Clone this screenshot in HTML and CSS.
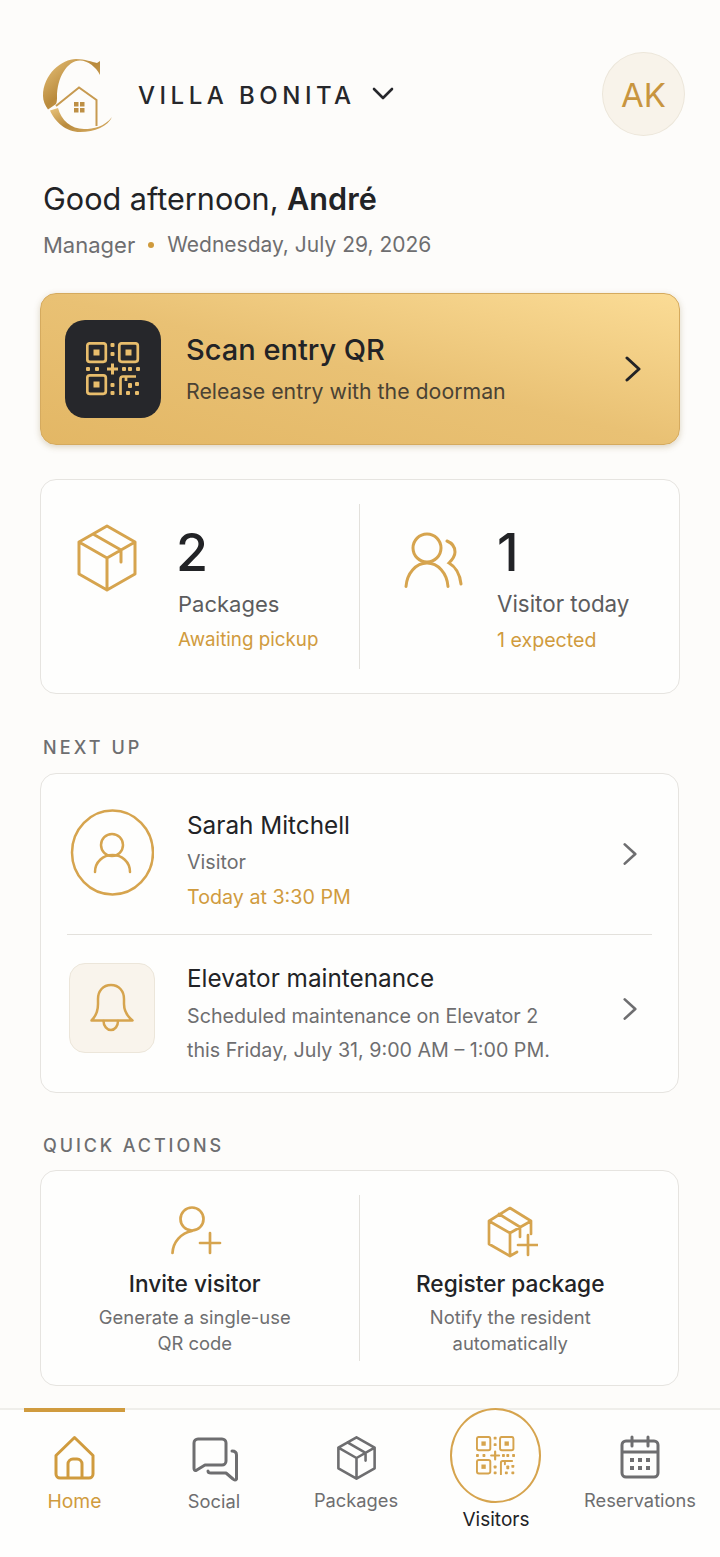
FILE: index.html
```html
<!DOCTYPE html>
<html>
<head>
    <title>Villa Bonita</title>
    <meta charset="utf-8">
    <meta name="viewport" content="width=device-width, initial-scale=1">
    <link rel="stylesheet" href="styles.css">
</head>
<body>

    <!-- shared icons -->
    <svg class="defs" width="0" height="0">
        <symbol id="qr" viewBox="0 0 54 54">
            <rect x="1.3" y="1.3" width="18.5" height="18.5" rx="2.5" fill="none" stroke="currentColor" stroke-width="2.7"/>
            <rect x="7.5" y="7.5" width="6" height="6" fill="currentColor"/>
            <rect x="33.3" y="1.3" width="18.5" height="18.5" rx="2.5" fill="none" stroke="currentColor" stroke-width="2.7"/>
            <rect x="39.5" y="7.5" width="6" height="6" fill="currentColor"/>
            <rect x="1.3" y="33.3" width="18.5" height="18.5" rx="2.5" fill="none" stroke="currentColor" stroke-width="2.7"/>
            <rect x="7.5" y="39.5" width="6" height="6" fill="currentColor"/>
            <path d="M26.5 21.5v11M21 27h11" fill="none" stroke="currentColor" stroke-width="3"/>
            <g fill="currentColor">
                <rect x="24.5" y="1" width="4" height="4" rx="1"/>
                <rect x="24.5" y="10" width="4" height="4" rx="1"/>
                <rect x="0" y="25" width="4" height="4" rx="1"/>
                <rect x="9" y="25" width="4" height="4" rx="1"/>
                <rect x="36" y="25" width="4" height="4" rx="1"/>
                <rect x="42" y="25" width="4" height="4" rx="1"/>
                <rect x="50" y="25" width="4" height="4" rx="1"/>
                <rect x="24.5" y="41" width="4" height="4" rx="1"/>
                <rect x="24.5" y="49" width="4" height="4" rx="1"/>
                <rect x="42" y="41" width="4" height="5" rx="1"/>
                <rect x="49" y="40" width="4" height="4" rx="1"/>
                <rect x="40" y="49" width="4" height="4" rx="1"/>
                <rect x="49" y="49" width="4" height="4" rx="1"/>
            </g>
            <path d="M34.5 53V37a2.5 2.5 0 0 1 2.5-2.5H50M40 34.5V39" fill="none" stroke="currentColor" stroke-width="2.7"/>
        </symbol>
        <symbol id="box" viewBox="0 0 60 68">
            <path d="M30 2 58 18V50L30 66 2 50V18ZM2 18 30 34 58 18M30 34V66M16 10 44 26V38" fill="none" stroke="currentColor" stroke-linejoin="round" stroke-linecap="round"/>
        </symbol>
        <symbol id="chev" viewBox="0 0 16 26">
            <path d="M2 2 14 13 2 24" fill="none" stroke="currentColor" stroke-linecap="round" stroke-linejoin="round"/>
        </symbol>
    </svg>

    <div class="app">
        <header class="top">
            <svg class="logo" viewBox="40 52 76 80" width="76" height="80">
                <defs>
                    <linearGradient id="gold" x1="0" y1="0" x2="1" y2="1">
                        <stop offset="0" stop-color="#e9c47c"/>
                        <stop offset="0.5" stop-color="#b98a3c"/>
                        <stop offset="1" stop-color="#dcb36b"/>
                    </linearGradient>
                </defs>
                <path d="M100 59V73C96 65 88 58.5 80 58.5C67 58.5 57 76 57 95C57 97 57 100 56 102L48 107.5C45 103 43 99 43 94C43 72 62 57 76 57C85 57 92 60 97 61Z" fill="url(#gold)"/>
                <path d="M50 108.5 58 106C61 118 71 127 84 127C94 127 104 125 112 115C108 124 95 130 80 130C66 130 55 120 50 108.5Z" fill="url(#gold)"/>
                <path d="M56 104 79 85.5 96.5 98V124" fill="none" stroke="#c79a50" stroke-width="2"/>
                <g fill="#bd8f45">
                    <rect x="74" y="100" width="4.5" height="4.5"/><rect x="80" y="100" width="4.5" height="4.5"/>
                    <rect x="74" y="106" width="4.5" height="4.5"/><rect x="80" y="106" width="4.5" height="4.5"/>
                </g>
            </svg>
            <div class="brand">VILLA BONITA</div>
            <svg class="brand-chev" viewBox="0 0 22 14" width="22" height="14"><path d="M2 2 11 11 20 2" fill="none" stroke="#26272b" stroke-width="2.6" stroke-linecap="round" stroke-linejoin="round"/></svg>
            <div class="avatar">AK</div>
        </header>

        <section class="hello">
            <h1>Good afternoon, <b>André</b></h1>
            <p><span class="role">Manager</span><span class="dot"></span><span>Wednesday, July 29, 2026</span></p>
        </section>

        <section class="hero">
            <div class="hero-tile"><svg width="54" height="54"><use href="#qr"/></svg></div>
            <div class="hero-text">
                <h2>Scan entry QR</h2>
                <p>Release entry with the doorman</p>
            </div>
            <svg class="hero-chev" width="16" height="26"><use href="#chev"/></svg>
        </section>

        <section class="card stats">
            <div class="stat">
                <svg class="stat-icon box-ic" width="60" height="68"><use href="#box"/></svg>
                <div class="stat-text">
                    <div class="num">2</div>
                    <div class="lab">Packages</div>
                    <div class="sub">Awaiting pickup</div>
                </div>
            </div>
            <div class="stat">
                <svg class="stat-icon people" viewBox="404 532 60 56" width="60" height="56">
                    <circle cx="428" cy="548" r="14"/>
                    <path d="M407 586.5C408 573 417 563 428 563S448 573 449 586.5M448 541C453 543 456 547 456 552S453 560 450 563C457 567 461 575 462 584"/>
                </svg>
                <div class="stat-text">
                    <div class="num">1</div>
                    <div class="lab">Visitor today</div>
                    <div class="sub">1 expected</div>
                </div>
            </div>
        </section>

        <div class="label next-label">NEXT UP</div>
        <section class="card next">
            <div class="row row-visitor">
                <div class="row-ic">
                    <svg viewBox="70 809 84 88" width="84" height="88" class="gold-line">
                        <ellipse cx="112.5" cy="852.5" rx="40.5" ry="42"/>
                        <circle cx="112" cy="845" r="11"/>
                        <path d="M95 872C95 862 103 855 112.5 855S130 862 130 872"/>
                    </svg>
                </div>
                <div class="row-text">
                    <h3>Sarah Mitchell</h3>
                    <p>Visitor</p>
                    <p class="when">Today at 3:30 PM</p>
                </div>
                <svg class="row-chev" width="14" height="24"><use href="#chev"/></svg>
            </div>
            <div class="row row-notice">
                <div class="row-ic">
                    <div class="bell-tile">
                        <svg viewBox="89 984 46 50" width="46" height="50" class="gold-line">
                            <path d="M91.5 1021.5C96 1017 98 1012 98 1005V1000C98 992 103 986 111 986S124 992 124 1000V1005C124 1012 127 1017 132.5 1021.5Z"/>
                            <path d="M103.5 1022C103.5 1027 107 1031 111 1031S118 1027 118 1022"/>
                        </svg>
                    </div>
                </div>
                <div class="row-text">
                    <h3>Elevator maintenance</h3>
                    <p class="desc">Scheduled maintenance on Elevator 2<br>this Friday, July 31, 9:00 AM – 1:00 PM.</p>
                </div>
                <svg class="row-chev" width="14" height="24"><use href="#chev"/></svg>
            </div>
        </section>

        <div class="label quick-label">QUICK ACTIONS</div>
        <section class="card quick">
            <div class="action">
                <svg viewBox="170 1205 52 54" width="52" height="54" class="gold-line">
                    <circle cx="192" cy="1219" r="11.5"/>
                    <path d="M172.5 1253C173 1242 181 1233 192 1231M200 1243H220M210 1233V1253"/>
                </svg>
                <h4>Invite visitor</h4>
                <p>Generate a single-use<br>QR code</p>
            </div>
            <div class="action">
                <svg viewBox="485 1203 52 54" width="52" height="54" class="gold-line">
                    <path d="M509 1254 488 1242V1219L509 1206 530 1219V1232M488 1219 509 1231 530 1219M509 1231V1254L516 1250M498 1212 519 1225V1235M517 1243H537M527 1233V1253"/>
                </svg>
                <h4>Register package</h4>
                <p>Notify the resident<br>automatically</p>
            </div>
        </section>

        <nav class="tabs">
            <a class="tab active">
                <svg viewBox="52 1434 43 46" width="43" height="46">
                    <path d="M55 1454.5 73.5 1436.5 92 1454.5V1473A4 4 0 0 1 88 1477H59A4 4 0 0 1 55 1473ZM67 1477V1463A5 5 0 0 1 72 1458H76A5 5 0 0 1 81 1463V1477"/>
                </svg>
                <span>Home</span>
            </a>
            <a class="tab tab-social">
                <svg viewBox="190 1435 49 48" width="49" height="48">
                    <path d="M194 1443A4 4 0 0 1 198 1439H222A4 4 0 0 1 226 1443V1461A4 4 0 0 1 222 1465H205L196 1470.5Q194 1471 194 1468ZM232 1451Q236.5 1451 236.5 1455V1479Q235 1481 233 1479L226 1473H211Q208 1473 208 1471"/>
                </svg>
                <span>Social</span>
            </a>
            <a class="tab tab-pack">
                <svg class="tab-box" width="39" height="44"><use href="#box"/></svg>
                <span>Packages</span>
            </a>
            <a class="tab tab-scan">
                <div class="scan-ring"><svg width="39" height="39"><use href="#qr"/></svg></div>
                <span>Visitors</span>
            </a>
            <a class="tab">
                <svg viewBox="619 1435 42 45" width="42" height="45">
                    <path d="M626 1441H654A4 4 0 0 1 658 1445V1473A4 4 0 0 1 654 1477H626A4 4 0 0 1 622 1473V1445A4 4 0 0 1 626 1441ZM622 1452H658M632 1437V1446M648 1437V1446"/>
                    <g class="cal-dots">
                        <rect x="630" y="1458" width="4" height="4"/><rect x="638" y="1458" width="4" height="4"/><rect x="646" y="1458" width="4" height="4"/>
                        <rect x="630" y="1466" width="4" height="4"/><rect x="638" y="1466" width="4" height="4"/><rect x="646" y="1466" width="4" height="4"/>
                    </g>
                </svg>
                <span>Reservations</span>
            </a>
        </nav>
    </div>

</body>
</html>
```

FILE: styles.css
```css
html, body {
    height: 100%;
}

body {
    margin: 0;
    background-color: #fdfcfa;
    font-family: Inter, "Liberation Sans", sans-serif;
    color: #222326;
    overflow: hidden;
}

h1, h2, h3, h4, p {
    margin: 0;
    font-weight: 400;
}

.defs {
    display: block;
    height: 0;
}

.app {
    width: 720px;
    height: 1557px;
    display: flex;
    flex-direction: column;
}

/* header */
.top {
    display: flex;
    align-items: center;
    height: 84px;
    margin: 52px 35px 0 40px;
}
.logo {
    flex: none;
}
.brand {
    margin-left: 22px;
    margin-top: 2px;
    font-size: 24px;
    letter-spacing: 4.5px;
    font-weight: 500;
    color: #26272b;
}
.brand-chev {
    margin-left: 16px;
}
.avatar {
    margin-left: auto;
    width: 83px;
    height: 84px;
    padding-top: 2px;
    box-sizing: border-box;
    border-radius: 50%;
    border: 1px solid #ece6da;
    background: #f8f3ea;
    color: #c8953f;
    font-size: 33px;
    display: flex;
    align-items: center;
    justify-content: center;
}

/* greeting */
.hello {
    margin: 43px 0 0 43px;
}
.hello h1 {
    font-size: 30.6px;
    line-height: 40px;
}
.hello b {
    font-weight: 600;
}
.hello p {
    margin-top: 11px;
    font-size: 21px;
    line-height: 30px;
    color: #6e6e70;
    display: flex;
    align-items: center;
}
.role {
    font-size: 22px;
}
.dot {
    width: 6px;
    height: 6px;
    border-radius: 50%;
    background: #cf9a3c;
    margin: 0 13px;
}

/* scan banner */
.hero {
    margin: 33px 40px 0;
    height: 150px;
    display: flex;
    align-items: center;
    border: 1px solid #d5aa5e;
    border-radius: 16px;
    background: linear-gradient(to top right, #e3b765 0%, #e9c174 50%, #fbdc96 100%);
    box-shadow: 0 2px 6px rgba(120, 90, 30, 0.25);
}
.hero-tile {
    flex: none;
    width: 96px;
    height: 98px;
    margin-left: 24px;
    border-radius: 20px;
    background: #26272b;
    color: #e8bd6c;
    display: flex;
    align-items: center;
    justify-content: center;
}
.hero-text {
    margin-left: 25px;
}
.hero h2 {
    font-size: 29px;
    line-height: 36px;
    font-weight: 500;
}
.hero p {
    margin-top: 8px;
    font-size: 21.3px;
    line-height: 30px;
    color: #4a4234;
}
.hero-chev {
    margin-left: auto;
    margin-right: 38px;
    color: #222326;
    stroke-width: 3;
}

/* cards */
.card {
    margin: 0 41px 0 40px;
    background: #fefefd;
    border: 1px solid #e6e4e0;
    border-radius: 16px;
}
.label {
    margin-left: 43px;
    font-size: 18px;
    line-height: 24px;
    letter-spacing: 3.1px;
    font-weight: 500;
    color: #6e6e70;
}

/* stats */
.stats {
    margin: 34px 40px 0;
    height: 213px;
    display: grid;
    grid-template-columns: 1fr 1fr;
    align-items: start;
    position: relative;
}
.stats::after,
.quick::after {
    content: "";
    position: absolute;
    left: 318px;
    top: 24px;
    bottom: 24px;
    width: 1px;
    background: #e3e1dc;
}
.stat {
    display: flex;
    align-items: flex-start;
}
.stat-icon {
    flex: none;
}
.box-ic {
    margin: 44px 0 0 36px;
    color: #d6a44e;
    stroke-width: 3;
}
.people {
    margin: 52px 0 0 43px;
    fill: none;
    stroke: #d6a44e;
    stroke-width: 3;
    stroke-linecap: round;
}
.stat-text {
    margin-left: 41px;
}
.stat:last-child .stat-text {
    margin-left: 34px;
}
.num {
    font-size: 52px;
    line-height: 60px;
    font-weight: 500;
    margin-top: 43px;
    margin-left: -2px;
}
.stat:last-child .num {
    margin-left: 0;
}
.lab {
    font-size: 22px;
    line-height: 30px;
    margin-top: 6px;
    color: #5c5c5e;
}
.stat:last-child .lab {
    font-size: 22.4px;
}
.sub {
    font-size: 18.8px;
    line-height: 28px;
    margin-top: 7px;
    color: #d09b3e;
}
.stat:last-child .sub {
    font-size: 19.6px;
}

.next-label {
    margin-top: 42px;
}

/* next up */
.next {
    margin-top: 13px;
    height: 318px;
}
.row {
    display: flex;
    margin: 0 26px;
}
.row-visitor {
    height: 160px;
    border-bottom: 1px solid #e3e1dc;
}
.row-notice {
    height: 156px;
}
.row-ic {
    flex: none;
    width: 117px;
    margin-left: 3px;
}
.row-visitor .row-ic {
    padding-top: 35px;
}
.row-notice .row-ic {
    padding-top: 28px;
}
.row-text h3 {
    font-size: 24.3px;
    line-height: 32px;
}
.row-visitor .row-text {
    padding-top: 35px;
}
.row-notice .row-text {
    padding-top: 27px;
}
.row-text p {
    font-size: 19.7px;
    line-height: 34px;
    color: #6e6e70;
}
.row-visitor .row-text p {
    margin-top: 5px;
    line-height: 32px;
}
.row-notice .row-text p {
    margin-top: 5px;
}
.row-text p.when {
    margin-top: 3px;
    color: #d09b3e;
}
.row-chev {
    margin-left: auto;
    margin-right: 15px;
    margin-top: 68px;
    color: #6e6e70;
    stroke-width: 3;
}
.row-notice .row-chev {
    margin-top: 62px;
}
.bell-tile {
    width: 86px;
    height: 90px;
    margin-left: -1px;
    border: 1px solid #ece6da;
    border-radius: 16px;
    background: #f9f4ec;
    box-sizing: border-box;
    display: flex;
    align-items: center;
    justify-content: center;
}
.gold-line {
    fill: none;
    stroke: #d6a44e;
    stroke-width: 2.5;
    stroke-linecap: round;
    stroke-linejoin: round;
}

.quick-label {
    margin-top: 41px;
    letter-spacing: 2.9px;
}

/* quick actions */
.quick {
    margin-top: 12px;
    height: 214px;
    display: grid;
    grid-template-columns: 1fr 1fr;
    position: relative;
}
.action {
    text-align: center;
    padding-top: 34px;
}
.action:first-child {
    padding-right: 11px;
}
.action:last-child {
    padding-right: 17px;
}
.action svg {
    display: block;
    margin: 0 auto;
    stroke-width: 2.7;
}
.action:first-child svg {
    margin-left: 129px;
}
.action:last-child svg {
    margin-left: 126px;
}
.action h4 {
    margin-top: 9px;
    font-size: 22.7px;
    line-height: 32px;
    font-weight: 500;
}
.action p {
    margin-top: 4px;
    font-size: 18.4px;
    line-height: 26px;
    color: #6e6e70;
}

/* bottom bar */
.tabs {
    margin-top: 22px;
    flex: 1;
    display: grid;
    grid-template-columns: 101px 178px 106px 174px 114px;
    padding-left: 24px;
    border-top: 2px solid #efeeea;
    background: #fefefd;
}
.tab {
    display: flex;
    flex-direction: column;
    align-items: center;
    padding-top: 25px;
    font-size: 18.3px;
    line-height: 26px;
    color: #6e6e70;
    white-space: nowrap;
    position: relative;
}
.tab svg {
    fill: none;
    stroke: #6e6e70;
    stroke-width: 3;
    stroke-linecap: round;
    stroke-linejoin: round;
}
.tab span {
    margin-top: 7px;
}
.tab.active {
    font-size: 19.3px;
    color: #d09b3e;
}
.tab.active svg {
    stroke: #d09b3e;
}
.tab.active::before {
    content: "";
    position: absolute;
    left: 0;
    right: 0;
    top: -2px;
    height: 4px;
    background: #d09b3e;
}
.tab-social svg {
    margin-bottom: -2px;
}
.tab-pack svg {
    margin-top: 1px;
}
.tab-box {
    color: #6e6e70;
    stroke-width: 4 !important;
}
.cal-dots {
    fill: #6e6e70;
    stroke: none;
}
.tab-scan {
    padding-top: 0;
    font-size: 19px;
    color: #222326;
}
.scan-ring {
    width: 91px;
    height: 95px;
    margin-top: -2px;
    margin-right: 2px;
    box-sizing: border-box;
    border: 2px solid #d6a44e;
    border-radius: 50%;
    background: #fefefd;
    color: #d6a44e;
    display: flex;
    align-items: center;
    justify-content: center;
}
.tab-scan svg {
    stroke: none;
}
.tab-scan span {
    margin-top: 4px;
}
```
